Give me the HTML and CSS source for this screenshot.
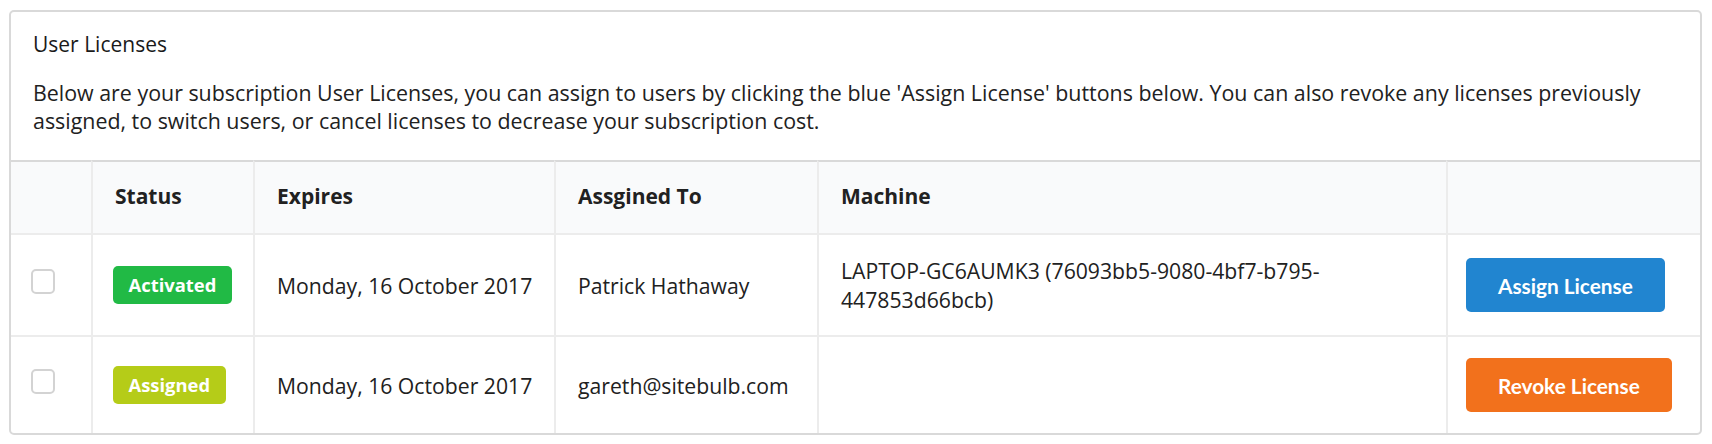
FILE: index.html
```html
<!DOCTYPE html>
<html lang="en">
<head>
<meta charset="utf-8">
<title>User Licenses</title>
<link rel="stylesheet" href="styles.css">
</head>
<body>
<div class="page">
  <section class="card">
    <div class="card-head">
      <h2 class="card-title">User Licenses</h2>
      <p class="card-text">Below are your subscription User Licenses, you can assign to users by clicking the blue 'Assign License' buttons below. You can also revoke any licenses previously assigned, to switch users, or cancel licenses to decrease your subscription cost.</p>
    </div>
    <table class="lic-table">
      <colgroup>
        <col class="c-check">
        <col class="c-status">
        <col class="c-expires">
        <col class="c-user">
        <col class="c-machine">
        <col class="c-action">
      </colgroup>
      <thead>
        <tr>
          <th class="cell-check"></th>
          <th>Status</th>
          <th>Expires</th>
          <th>Assgined To</th>
          <th>Machine</th>
          <th></th>
        </tr>
      </thead>
      <tbody>
        <tr>
          <td class="cell-check"><input type="checkbox" class="check"></td>
          <td><span class="badge badge-green">Activated</span></td>
          <td class="nowrap">Monday, 16 October 2017</td>
          <td class="nowrap">Patrick Hathaway</td>
          <td>LAPTOP-GC6AUMK3 (76093bb5-9080-4bf7-b795-447853d66bcb)</td>
          <td><button class="btn btn-blue">Assign License</button></td>
        </tr>
        <tr>
          <td class="cell-check"><input type="checkbox" class="check"></td>
          <td><span class="badge badge-olive">Assigned</span></td>
          <td class="nowrap">Monday, 16 October 2017</td>
          <td class="nowrap">gareth@sitebulb.com</td>
          <td></td>
          <td><button class="btn btn-orange">Revoke License</button></td>
        </tr>
      </tbody>
    </table>
  </section>
</div>
</body>
</html>
```
FILE: styles.css
```css
* { box-sizing: border-box; }

html, body {
  margin: 0;
  background: #ffffff;
}

body {
  font-family: "Open Sans", "Noto Sans", sans-serif;
  color: #212121;
}

.page {
  padding: 10px 10px 0 9px;
}

.card {
  border: 2px solid #d9d9d9;
  border-radius: 5px;
  background: #fff;
  overflow: hidden;
}

.card-head {
  padding: 18px 22px 25px 22px;
}

.card-title {
  margin: 0;
  font-size: 21px;
  font-weight: 500;
  line-height: 28px;
  color: #1a1a1a;
}

.card-text {
  margin: 21px 0 0 0;
  font-size: 21.4px;
  line-height: 28px;
}

.lic-table {
  width: 100%;
  table-layout: fixed;
  border-collapse: separate;
  border-spacing: 0;
  font-size: 21.2px;
  line-height: 29px;
}

.c-check { width: 80px; }
.c-status { width: 162px; }
.c-expires { width: 301px; }
.c-user { width: 263px; }
.c-machine { width: 629px; }

.lic-table th,
.lic-table td {
  padding: 21px 14px 21px 22px;
  text-align: left;
  vertical-align: middle;
  border-left: 2px solid #ececec;
}

.lic-table .nowrap { white-space: nowrap; }

.lic-table th.cell-check,
.lic-table td.cell-check {
  border-left: none;
  padding-left: 20px;
}

.lic-table thead th {
  background: #f9fafb;
  font-weight: 700;
  font-size: 21px;
  border-top: 2px solid #d9d9d9;
  border-bottom: 2px solid #ececec;
  padding-top: 20px;
  padding-bottom: 22px;
}

.lic-table tbody tr + tr td {
  border-top: 2px solid #ececec;
}

.check {
  appearance: none;
  -webkit-appearance: none;
  display: block;
  width: 24px;
  height: 25px;
  margin: 0 0 8px 0;
  border: 2px solid #d3d3d3;
  border-radius: 5px;
  background: #fff;
}

.badge {
  display: inline-block;
  font-size: 18.4px;
  font-weight: 700;
  line-height: 24px;
  padding: 7px 15.5px;
  border-radius: 5px;
  color: #ffffff;
  vertical-align: middle;
  margin-left: -2px;
}

.badge-green { background: #21ba45; }
.badge-olive { background: #b5cc18; }

.btn {
  display: inline-block;
  height: 54px;
  padding: 0 32px;
  border: none;
  border-radius: 5px;
  font-family: "Lato", sans-serif;
  font-size: 20.8px;
  font-weight: 700;
  color: #ffffff;
  vertical-align: middle;
  margin-left: -4px;
}

.btn-blue { background: #2185d0; }
.btn-orange { background: #f2711c; }
```
